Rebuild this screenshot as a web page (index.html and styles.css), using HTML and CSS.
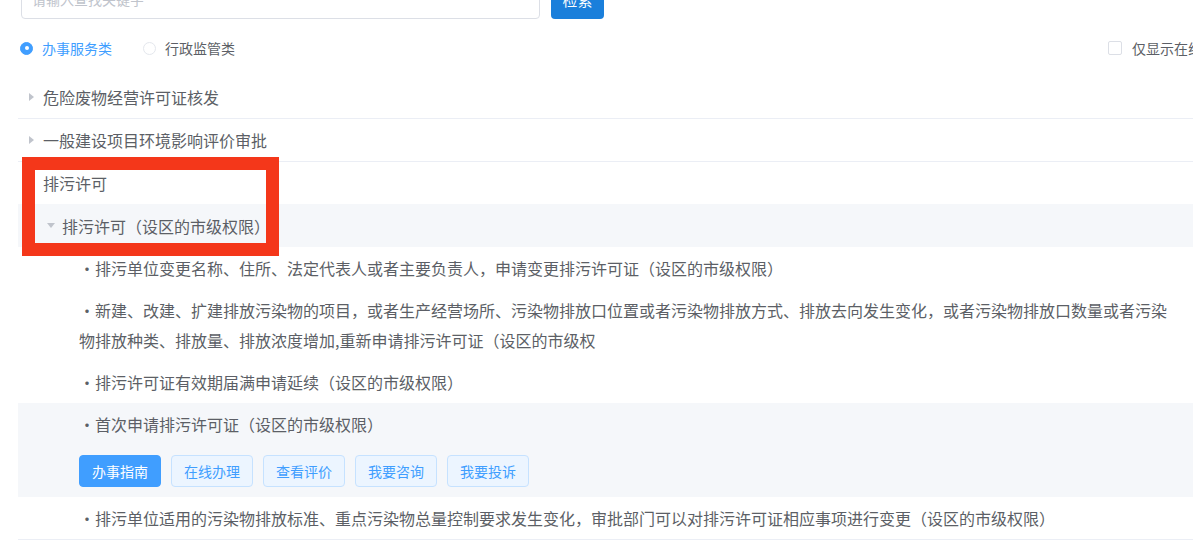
FILE: index.html
```html
<!DOCTYPE html>
<html lang="zh-CN">
<head>
    <meta charset="UTF-8">
    <title>事项目录</title>
    <link rel="stylesheet" href="styles.css">
</head>
<body>
<div class="page">
    <div class="search-bar">
        <input type="text" class="search-input" placeholder="请输入查找关键字">
        <button class="search-btn">检索</button>
    </div>

    <div class="filter-row">
        <label class="radio checked"><span class="radio-dot"></span>办事服务类</label>
        <label class="radio"><span class="radio-dot"></span>行政监管类</label>
        <label class="check"><span class="check-box"></span>仅显示在线办理事项</label>
    </div>

    <div class="tree">
        <div class="node"><span class="caret"></span>危险废物经营许可证核发</div>
        <div class="node"><span class="caret"></span>一般建设项目环境影响评价审批</div>
        <div class="node node-open">排污许可</div>
        <div class="sub-node"><span class="caret down"></span>排污许可（设区的市级权限）</div>

        <div class="item">・排污单位变更名称、住所、法定代表人或者主要负责人，申请变更排污许可证（设区的市级权限）</div>
        <div class="item">・新建、改建、扩建排放污染物的项目，或者生产经营场所、污染物排放口位置或者污染物排放方式、排放去向发生变化，或者污染物排放口数量或者污染物排放种类、排放量、排放浓度增加,重新申请排污许可证（设区的市级权</div>
        <div class="item">・排污许可证有效期届满申请延续（设区的市级权限）</div>
        <div class="item active">
            ・首次申请排污许可证（设区的市级权限）
            <div class="actions">
                <button class="act primary">办事指南</button>
                <button class="act">在线办理</button>
                <button class="act">查看评价</button>
                <button class="act">我要咨询</button>
                <button class="act">我要投诉</button>
            </div>
        </div>
        <div class="item last">・排污单位适用的污染物排放标准、重点污染物总量控制要求发生变化，审批部门可以对排污许可证相应事项进行变更（设区的市级权限）</div>
    </div>

    <!-- annotation frame -->
    <div class="mark"></div>
</div>
</body>
</html>
```

FILE: styles.css
```css
html, body {
    margin: 0;
    overflow: hidden;
    background: #fff;
}
body {
    font-family: "Microsoft YaHei", "Noto Sans CJK SC", sans-serif;
    color: #5c5f66;
}
.page {
    display: flow-root;
    position: relative;
    width: 1260px;
    padding-left: 18px;
    box-sizing: border-box;
}

/* search */
.search-bar {
    display: flex;
    margin-top: -21px;
    padding-left: 3px;
}
.search-input {
    width: 519px;
    height: 40px;
    box-sizing: border-box;
    border: 1px solid #dcdfe6;
    border-radius: 4px;
    padding: 0 10px;
    font-family: inherit;
    font-size: 14px;
    outline: none;
}
.search-input::placeholder {
    color: #c0c4cc;
}
.search-btn {
    margin-left: 11px;
    width: 53px;
    height: 40px;
    border: none;
    border-radius: 4px;
    background: #1a7fdb;
    color: #fff;
    font-family: inherit;
    font-size: 15px;
}

/* filters */
.filter-row {
    display: flex;
    align-items: center;
    height: 28px;
    margin-top: 15px;
    padding-left: 2px;
    font-size: 14px;
}
.radio {
    display: flex;
    align-items: center;
    margin-right: 31px;
    color: #5c5f66;
}
.radio.checked {
    color: #409eff;
}
.radio-dot {
    width: 13px;
    height: 13px;
    box-sizing: border-box;
    border: 1px solid #e4e7ed;
    border-radius: 50%;
    margin-right: 9px;
    background: #fff;
    position: relative;
}
.radio.checked .radio-dot {
    border-color: #409eff;
    background: #409eff;
}
.radio.checked .radio-dot::after {
    content: "";
    position: absolute;
    left: 50%;
    top: 50%;
    width: 4px;
    height: 4px;
    margin: -2px 0 0 -2px;
    border-radius: 50%;
    background: #fff;
}
.check {
    display: flex;
    align-items: center;
    margin-left: auto;
    margin-right: 2px;
    color: #5c5f66;
}
.check-box {
    width: 14px;
    height: 14px;
    box-sizing: border-box;
    border: 1px solid #dcdfe6;
    border-radius: 2px;
    margin-right: 10px;
}

/* tree */
.tree {
    margin-top: 14px;
    font-size: 16px;
}
.node {
    display: flex;
    align-items: center;
    height: 42px;
    padding-left: 11px;
    border-bottom: 1px solid #ebeef5;
}
.node-open {
    padding-left: 25px;
    border-bottom: none;
}
.caret {
    width: 0;
    height: 0;
    border-top: 4px solid transparent;
    border-bottom: 4px solid transparent;
    border-left: 5px solid #c0c4cc;
    margin-right: 9px;
}
.caret.down {
    border-left: 4px solid transparent;
    border-right: 4px solid transparent;
    border-top: 5px solid #c0c4cc;
    border-bottom: none;
    margin-right: 7px;
}
.sub-node {
    display: flex;
    align-items: center;
    height: 43px;
    padding-left: 29px;
    background: #f5f7fa;
}
.item {
    padding: 6px 84px 6px 61px;
    line-height: 30px;
}
.item.active {
    background: #f5f7fa;
    padding-bottom: 10px;
}
.item.last {
    border-bottom: 1px solid #ebeef5;
}
.actions {
    display: flex;
    gap: 10px;
    margin-top: 16px;
}
.act {
    height: 32px;
    padding: 0 12px;
    border: 1px solid #c6e2ff;
    border-radius: 4px;
    background: #ecf5ff;
    color: #409eff;
    font-family: inherit;
    font-size: 14px;
}
.act.primary {
    background: #409eff;
    border-color: #409eff;
    color: #fff;
}

.mark {
    position: absolute;
    left: 22px;
    top: 157px;
    width: 257px;
    height: 99px;
    box-sizing: border-box;
    border: 13px solid #f4371a;
}
```
